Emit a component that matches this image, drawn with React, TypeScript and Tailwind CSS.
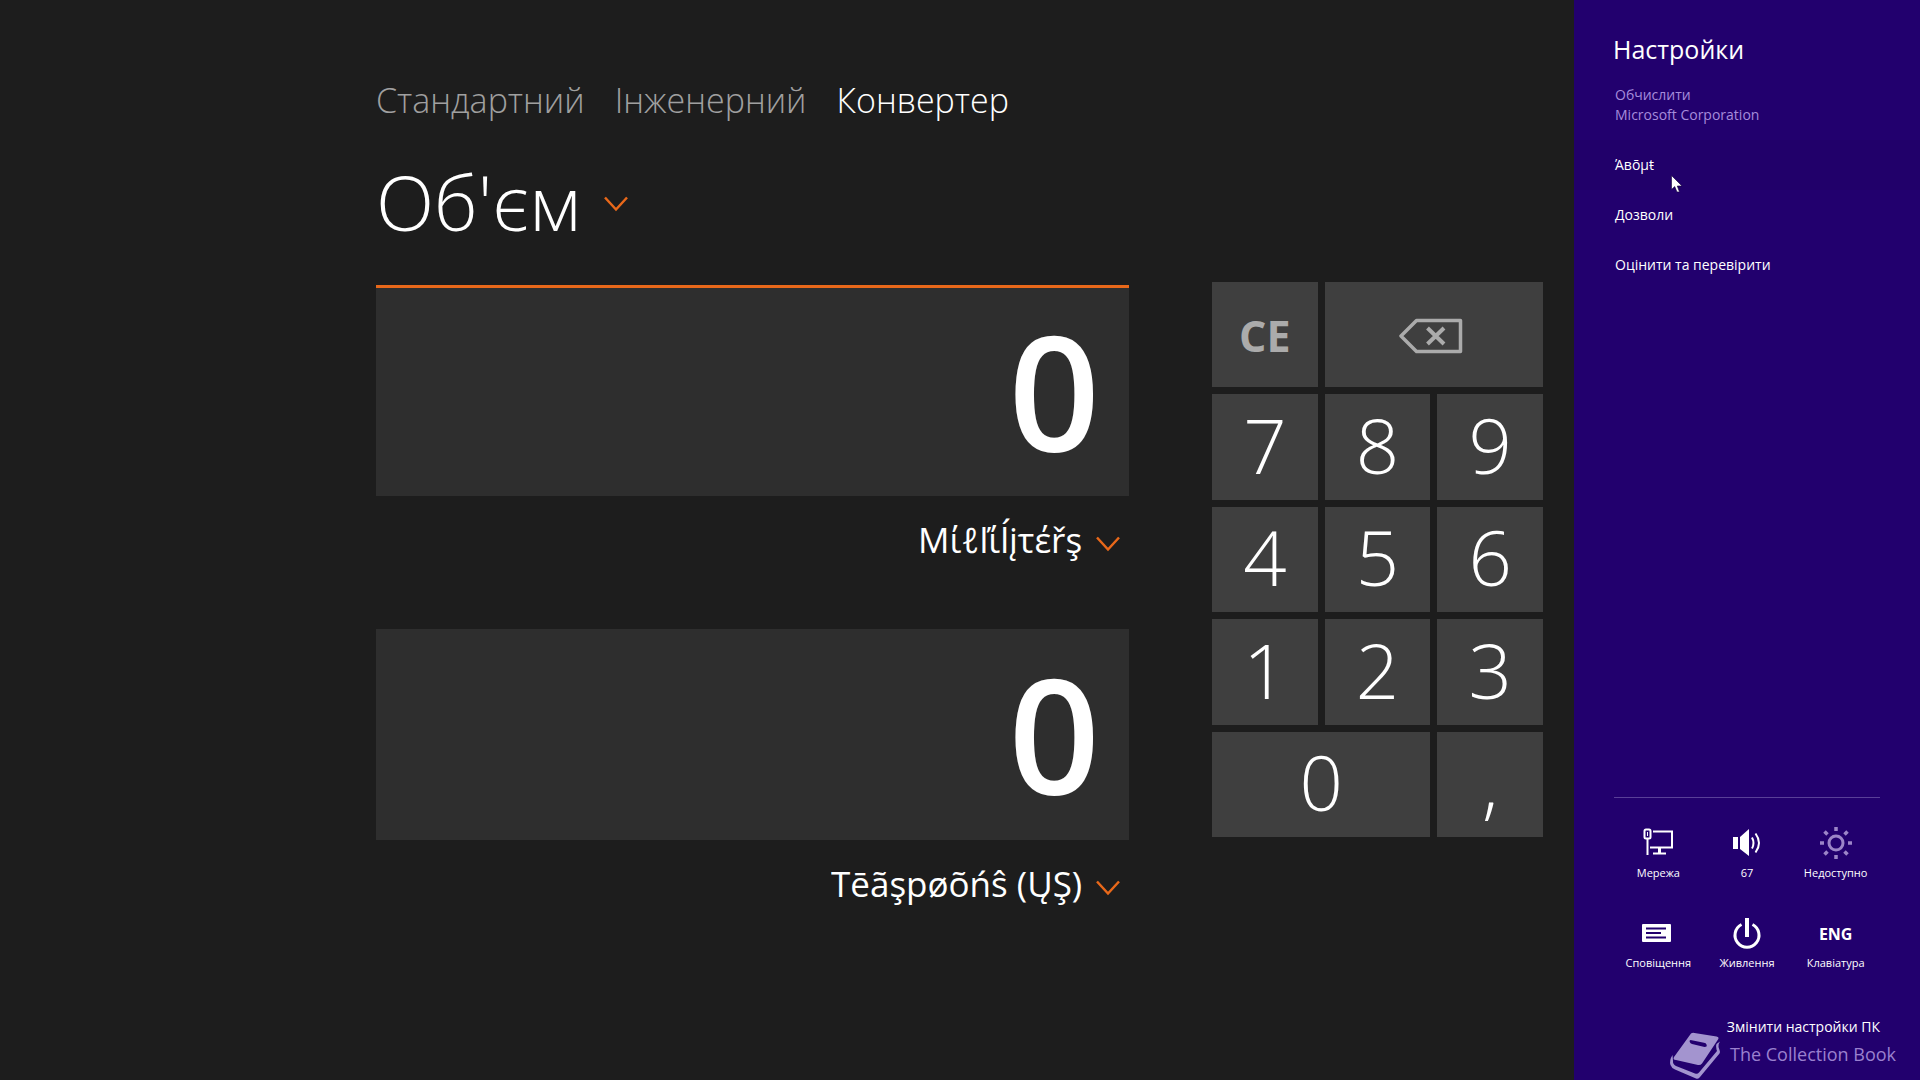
import { useState } from 'react';

type KeyVariant = 'digit' | 'clear' | 'back';

interface KeyDef {
  label: string;
  wide?: boolean;
  variant?: KeyVariant;
}

const MODES = ['Стандартний', 'Інженерний', 'Конвертер'];

const KEYS: KeyDef[] = [
  { label: 'CE', variant: 'clear' },
  { label: 'Backspace', wide: true, variant: 'back' },
  { label: '7' },
  { label: '8' },
  { label: '9' },
  { label: '4' },
  { label: '5' },
  { label: '6' },
  { label: '1' },
  { label: '2' },
  { label: '3' },
  { label: '0', wide: true },
  { label: ',' },
];

const KEY_STYLES: Record<KeyVariant, string> = {
  digit: 'pb-1 text-[76px] font-light text-white',
  clear: 'pt-0.5 text-[43px] font-bold text-[#ababab]',
  back: 'pt-0.5 pr-1.5',
};

const SETTINGS = ['Άвōµŧ', 'Дозволи', 'Оцінити та перевірити'];

function Chevron() {
  return (
    <svg className="w-6 h-4" viewBox="0 0 24 16" fill="none" stroke="#e8681a" strokeWidth="2.500">
      <path d="M1 1.500 12 13.500 23 1.500" />
    </svg>
  );
}

function BackspaceIcon() {
  return (
    <svg className="w-16 h-9" viewBox="0 0 64 36" fill="none" stroke="#ababab">
      <path d="M2 18 17.500 2.500H61.500V33.500H17.500Z" strokeWidth="3.500" strokeLinejoin="round" />
      <path d="M28.500 10 45 26M45 10 28.500 26" strokeWidth="4" />
    </svg>
  );
}

function NetworkIcon() {
  return (
    <svg className="w-[34px] h-8" viewBox="0 0 34 32" fill="none" stroke="#fff" strokeWidth="2">
      <path d="M12 4.500H31V20.500H9" />
      <path d="M18.500 21V26" strokeWidth="3" />
      <path d="M12 26.500H25" />
      <rect x="3.500" y="2.500" width="6" height="9" rx="1.500" />
      <path d="M6.500 5V9" strokeWidth="1" />
      <path d="M6.500 12V28" />
    </svg>
  );
}

function VolumeIcon() {
  return (
    <svg className="w-[34px] h-8" viewBox="0 0 34 32" fill="none" stroke="#fff" strokeWidth="2">
      <path d="M3 10H8V22H3ZM10 10 19 2V29L10 22Z" fill="#fff" stroke="none" />
      <path d="M22 10.500Q25 16 22 21.500" />
      <path d="M25.500 6.500Q32.500 16 25.500 25.500" />
    </svg>
  );
}

function BrightnessIcon() {
  return (
    <svg className="w-[34px] h-8" viewBox="0 0 34 32" fill="none" stroke="#9c85c8">
      <circle cx="17" cy="16" r="7" strokeWidth="3" />
      <path
        d="M17 0V4M17 28V32M1 16H5M29 16H33M5.500 4.500 8.500 7.500M25.500 24.500 28.500 27.500M28.500 4.500 25.500 7.500M8.500 24.500 5.500 27.500"
        strokeWidth="3.500"
      />
    </svg>
  );
}

function NotificationsIcon() {
  return (
    <svg className="w-[34px] h-8" viewBox="0 0 34 32">
      <rect x="1" y="7" width="29" height="18" rx="1" fill="#fff" />
      <path d="M5 11.500H25M5 16H20M5 20.500H25" stroke="#22006e" strokeWidth="2" />
    </svg>
  );
}

function PowerIcon() {
  return (
    <svg className="w-[34px] h-8" viewBox="0 0 34 32" fill="none" stroke="#fff">
      <path d="M11.500 7.500A12 12 0 1 0 22.500 7.500" strokeWidth="3" />
      <path d="M17 1V20" strokeWidth="4" />
    </svg>
  );
}

function BookIcon() {
  return (
    <svg className="w-[52px] h-12" viewBox="0 0 52 48" fill="#a394cf">
      <path
        fillRule="evenodd"
        d="M22 1.500Q23.500 0.500 25.500 1L47.500 4.500Q50.500 5 49 7.500L33 31.500Q31.500 33.500 29 33L7 28Q3.500 28 5 25ZM21.500 8Q20 8.300 20.800 10Q21.200 11.500 23 12L35.500 15Q38.500 15 37.500 12.500Q37 11 35 10.700Z"
      />
      <path d="M3.500 23Q0 28.500 1.500 33Q2.500 36 6 37.500L27 46.500Q29.500 47.500 31 45L50.500 21.500Q51.500 20 50.500 18L49.500 15Q49 12 51 9.500L47.500 12Q46.500 14 47.500 17.500L48 19L30 40.500Q28.500 42.500 26 41.500L7 34Q3.500 32 4 29Z" />
    </svg>
  );
}

function Display({ unit, label, active }: { unit: string; label: string; active?: boolean }) {
  return (
    <div className="mb-[67px]">
      <input
        readOnly
        value="0"
        aria-label={label}
        className={`block w-full h-[211px] bg-[#2e2e2e] pr-[29px] pb-1.5 text-right text-[160px] leading-none font-semibold text-white outline-none ${
          active ? 'border-t-[3px] border-[#e8681a]' : ''
        }`}
      />
      <div className="relative flex justify-end mt-[22px]">
        <select
          aria-label={`${label}: одиниця`}
          className="appearance-none bg-transparent h-11 pr-[46px] text-[35px] leading-[44px] text-white outline-none"
        >
          <option>{unit}</option>
        </select>
        <span className="absolute right-[9px] top-[18px] pointer-events-none">
          <Chevron />
        </span>
      </div>
    </div>
  );
}

function KeyButton({ def }: { def: KeyDef }) {
  const variant = def.variant ?? 'digit';
  return (
    <button
      aria-label={def.label}
      className={`flex items-center justify-center bg-[#3f3f3f] leading-none ${
        def.wide ? 'col-span-2' : ''
      } ${KEY_STYLES[variant]}`}
    >
      {variant === 'back' ? <BackspaceIcon /> : def.label}
    </button>
  );
}

function QuickSetting({ label, children }: { label: string; children: React.ReactNode }) {
  return (
    <button className="flex flex-col items-center text-[11px] leading-4">
      <span className="flex h-8 items-center">{children}</span>
      <span className="mt-1.5">{label}</span>
    </button>
  );
}

export default function App() {
  const [mode, setMode] = useState('Конвертер');

  return (
    <div className="flex min-h-screen bg-[#1d1d1d] font-['Open_Sans','Noto_Sans',sans-serif] text-white">
      <main className="flex-1 pl-[376px] pr-[31px] pt-[72px]">
        {/* Calculator modes */}
        <nav className="flex gap-[30px] text-[34px] leading-[56px] font-light">
          {MODES.map((m) => (
            <button
              key={m}
              onClick={() => setMode(m)}
              className={m === mode ? 'text-white' : 'text-[#a0a0a0]'}
            >
              {m}
            </button>
          ))}
        </nav>

        {/* Converter category */}
        <div className="mt-[22px] flex items-center">
          <select
            aria-label="Категорія"
            className="appearance-none bg-transparent h-[104px] text-[76px] leading-[104px] font-light outline-none"
          >
            <option>Об'єм</option>
          </select>
          <span className="ml-[23px] pt-1 pointer-events-none">
            <Chevron />
          </span>
        </div>

        <div className="mt-7 flex items-start gap-[83px]">
          <div className="flex-1 pt-[3px]">
            <Display label="Значення" unit="Μίℓľίĺįτέřş" active />
            <Display label="Результат" unit="Tēãşpøõńŝ (ŲŞ)" />
          </div>
          <div className="grid w-[331px] h-[555px] grid-cols-3 grid-rows-5 gap-[7px]">
            {KEYS.map((k) => (
              <KeyButton key={k.label} def={k} />
            ))}
          </div>
        </div>
      </main>

      {/* Settings charm */}
      <aside className="relative flex w-[346px] flex-col bg-[#22006e] pt-[31px]">
        <h1 className="pl-[39px] text-[25px] leading-9">Настройки</h1>
        <p className="mt-[18px] pl-[41px] text-sm leading-5 text-[#a68cdc]">
          Обчислити
          <br />
          Microsoft Corporation
        </p>
        <ul className="mt-[15px] text-sm">
          {SETTINGS.map((item, i) => (
            <li key={item}>
              <button className={`block w-full h-[50px] pl-[41px] text-left ${i === 0 ? 'bg-[#21006a]' : ''}`}>
                {item}
              </button>
            </li>
          ))}
        </ul>

        <div className="mt-auto mx-10 border-t border-[#593f98] pt-[29px]">
          <div className="grid grid-cols-3 gap-y-9">
            <QuickSetting label="Мережа">
              <NetworkIcon />
            </QuickSetting>
            <QuickSetting label="67">
              <VolumeIcon />
            </QuickSetting>
            <QuickSetting label="Недоступно">
              <BrightnessIcon />
            </QuickSetting>
            <QuickSetting label="Сповіщення">
              <NotificationsIcon />
            </QuickSetting>
            <QuickSetting label="Живлення">
              <PowerIcon />
            </QuickSetting>
            <QuickSetting label="Клавіатура">
              <span className="pt-0.5 text-base font-bold">ENG</span>
            </QuickSetting>
          </div>
        </div>
        <a href="#" className="mt-[46px] mb-[43px] mr-10 self-end text-sm leading-5">
          Змінити настройки ПК
        </a>

        {/* Channel watermark */}
        <div className="absolute right-6 bottom-0 flex items-end gap-[9px] text-[#9a80cf]">
          <BookIcon />
          <span className="pb-3 text-[18px] leading-7">The Collection Book</span>
        </div>

        {/* Mouse pointer */}
        <svg className="absolute left-[97px] top-[175px] w-3 h-[18px]" viewBox="0 0 12 18">
          <path d="M0.500 0.500V14.500L3.700 11.600L6 17H8.500L6.300 11H11Z" fill="#fff" stroke="#12003c" strokeWidth="0.600" />
        </svg>
      </aside>
    </div>
  );
}
